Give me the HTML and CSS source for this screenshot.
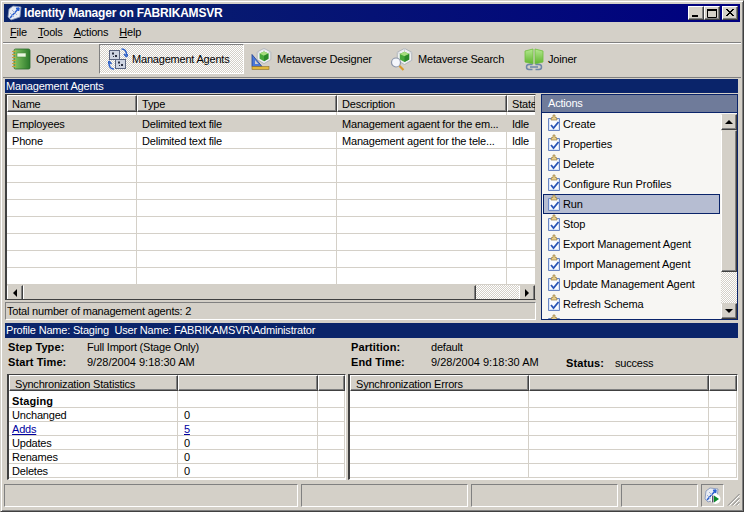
FILE: index.html
```html
<!DOCTYPE html>
<html lang="en">
<head>
<meta charset="utf-8">
<title>Identity Manager on FABRIKAMSVR</title>
<link rel="stylesheet" href="styles.css">
</head>
<body>
<svg class="defs" width="0" height="0" aria-hidden="true">
  <defs>
    <linearGradient id="gGreen" x1="0" y1="0" x2="1" y2="0"><stop offset="0" stop-color="#86c663"/><stop offset="1" stop-color="#2b7a2b"/></linearGradient>
    <linearGradient id="gPanel" x1="0" y1="0" x2="0" y2="1"><stop offset="0" stop-color="#b5e890"/><stop offset="1" stop-color="#5fb52e"/></linearGradient>
    <symbol id="clip" viewBox="0 0 16 18">
      <path d="M2.500 4.500h11v12h-11z" fill="#dbe5f7" stroke="#6a86c4"/>
      <path d="M4 6h8v9h-8z" fill="#fbfcff"/>
      <path d="M5.500 3.500h1.500v-2.500h2v2.500h1.500l.5 2.500h-6z" fill="#e8cf8e" stroke="#9a7d3c" stroke-width=".7"/>
      <path d="M5 11l2.500 3 5-6" fill="none" stroke="#2a55b5" stroke-width="1.800"/>
    </symbol>
    <symbol id="cube" viewBox="0 0 20 20">
      <path d="M10 .5l8.500 4.500v9.500l-8.500 5-8.500-5v-9.500z" fill="#eef0f2" stroke="#a9adb5"/>
      <path d="M10 .5v5M1.500 5l5 2.500M18.500 5l-5 2.500" stroke="#c8ccd2"/>
      <path d="M10 4.500l5.500 2.500v6.500l-5.500 3-5.500-3v-6.500z" fill="#46a83a"/>
      <path d="M4.500 7l5.500 2.700 5.500-2.700-5.500-2.500z" fill="#a5dd7d"/>
      <path d="M10 9.700v6.800l5.500-3v-6.500z" fill="#2b8a2b"/>
    </symbol>
    <symbol id="app" viewBox="0 0 16 16">
      <path d="M2 4l4-3 8 1-1 10-9 3-3-3z" fill="#e8ecf4" stroke="#7d8fb5" stroke-width=".8"/>
      <path d="M3 13l9-10M12 3l-3 .5M12 3l-.5 3" fill="none" stroke="#2a5fd0" stroke-width="1.500"/>
      <path d="M3 8l4 4M5 5l5 5" stroke="#9fb1d4"/>
    </symbol>
  </defs>
</svg>

<div class="window">
  <header class="titlebar">
    <svg class="title-icon" width="16" height="16"><use href="#app"/></svg>
    <span class="title-text">Identity Manager on FABRIKAMSVR</span>
    <div class="wbtns">
      <span class="wbtn"><svg width="14" height="12"><rect x="3" y="8" width="6" height="2" fill="#000"/></svg></span>
      <span class="wbtn"><svg width="14" height="12"><path d="M2.500 2.500h9v8h-9z" fill="none" stroke="#000"/><rect x="2" y="2" width="10" height="2" fill="#000"/></svg></span>
      <span class="wbtn wbtn-close"><svg width="14" height="12"><path d="M3 2l7 7M4 2l7 7M10 2l-7 7M11 2l-7 7" stroke="#000"/></svg></span>
    </div>
  </header>

  <nav class="menubar">
    <span class="menu"><u>F</u>ile</span>
    <span class="menu"><u>T</u>ools</span>
    <span class="menu"><u>A</u>ctions</span>
    <span class="menu"><u>H</u>elp</span>
  </nav>

  <div class="toolbar">
    <div class="tool tool-ops">
      <svg width="20" height="22" viewBox="0 0 20 22">
        <rect x="3" y="1" width="16" height="20" rx="1.500" fill="url(#gGreen)" stroke="#2c6b2c" stroke-width=".8"/>
        <rect x="6" y="5" width="9" height="4" fill="#e9f6df" stroke="#4c8c3c" stroke-width=".6"/>
        <path d="M1 3.500h4M1 6.500h4M1 9.500h4M1 12.500h4M1 15.500h4M1 18.500h4" stroke="#c9a23c" stroke-width="1.200"/>
      </svg>
      <span>Operations</span>
    </div>
    <div class="tool tool-active">
      <svg width="20" height="22" viewBox="0 0 20 22">
        <rect x="1.500" y="2.500" width="10" height="9" fill="#cfd5e2" stroke="#5b6580"/>
        <rect x="7.500" y="11.500" width="10" height="9" fill="#cfd5e2" stroke="#5b6580"/>
        <path d="M4 4.500h2v2h-2zM7 7h2v2h-2zM5 8h1v1h-1zM10 13.500h2v2h-2zM13 16h2v2h-2zM11 17h1v1h-1z" fill="#2a2f40"/>
        <path d="M13.500 1c3.500 0 5 2 5 6M18.500 9l-2.500-3M18.500 9l1.500-3" fill="none" stroke="#2f62c9" stroke-width="1.500"/>
        <path d="M6 21c-3.500 0-5-2-5-6M1 13l-1 3M1 13l2.500 3" fill="none" stroke="#2f62c9" stroke-width="1.500"/>
      </svg>
      <span>Management Agents</span>
    </div>
    <div class="tool tool-designer">
      <svg width="21" height="22" viewBox="0 0 21 22">
        <use href="#cube" x="5" y="0" width="16" height="16"/>
        <path d="M1 18.500v-12l10 12z" fill="#4a78d8" stroke="#1f3f90" stroke-width=".8"/>
        <path d="M4 16v-4l3.500 4z" fill="#d4d0c8"/>
        <rect x="1" y="18.500" width="17" height="3" fill="#e2b93c" stroke="#8a6d2c" stroke-width=".6"/>
      </svg>
      <span>Metaverse Designer</span>
    </div>
    <div class="tool tool-search">
      <svg width="23" height="23" viewBox="0 0 23 23">
        <use href="#cube" x="6" y="0" width="17" height="17"/>
        <circle cx="6" cy="14.500" r="4.500" fill="#f4f6fb" stroke="#8c95a8" stroke-width="1.200"/>
        <path d="M9.500 18l4 4" stroke="#d99a2b" stroke-width="2.200"/>
      </svg>
      <span>Metaverse Search</span>
    </div>
    <div class="tool tool-joiner">
      <svg width="20" height="23" viewBox="0 0 20 23">
        <path d="M1 3l8-2v15l-8-2z" fill="url(#gPanel)" stroke="#6fbf3c" stroke-width=".8"/>
        <path d="M19 3l-8-2v15l8-2z" fill="url(#gPanel)" stroke="#6fbf3c" stroke-width=".8"/>
        <path d="M8.500 16.500h-3.500a2.500 2.500 0 0 0 0 5h3.500M11.500 16.500h3.500a2.500 2.500 0 0 1 0 5h-3.500M6 19h8" fill="none" stroke="#6e86a8" stroke-width="1.500"/>
      </svg>
      <span>Joiner</span>
    </div>
  </div>

  <div class="band band-top">Management Agents</div>

  <main class="main">
    <section class="left">
      <div class="grid-panel">
        <table class="agents">
          <colgroup><col class="c-name"><col class="c-type"><col class="c-desc"><col class="c-state"></colgroup>
          <thead>
            <tr><th>Name</th><th>Type</th><th>Description</th><th>State</th></tr>
          </thead>
          <tbody>
            <tr class="spacer"><td></td><td></td><td></td><td></td></tr>
            <tr class="selected"><td>Employees</td><td>Delimited text file</td><td>Management agaent for the em...</td><td>Idle</td></tr>
            <tr><td>Phone</td><td>Delimited text file</td><td>Management agent for the tele...</td><td>Idle</td></tr>
            <tr><td></td><td></td><td></td><td></td></tr>
            <tr><td></td><td></td><td></td><td></td></tr>
            <tr><td></td><td></td><td></td><td></td></tr>
            <tr><td></td><td></td><td></td><td></td></tr>
            <tr><td></td><td></td><td></td><td></td></tr>
            <tr><td></td><td></td><td></td><td></td></tr>
            <tr><td></td><td></td><td></td><td></td></tr>
            <tr><td></td><td></td><td></td><td></td></tr>
          </tbody>
        </table>
        <div class="hscroll">
          <span class="sbtn"><svg width="14" height="14"><path d="M9 3v8l-4-4z" fill="#000"/></svg></span>
          <span class="hthumb"></span>
          <span class="hatch"></span>
          <span class="sbtn"><svg width="14" height="14"><path d="M5 3v8l4-4z" fill="#000"/></svg></span>
        </div>
      </div>
      <div class="total">Total number of management agents: 2</div>
    </section>

    <aside class="actions">
      <div class="actions-head">Actions</div>
      <div class="actions-body">
        <ul class="action-list">
          <li class="action"><svg width="16" height="18"><use href="#clip"/></svg><span>Create</span></li>
          <li class="action"><svg width="16" height="18"><use href="#clip"/></svg><span>Properties</span></li>
          <li class="action"><svg width="16" height="18"><use href="#clip"/></svg><span>Delete</span></li>
          <li class="action"><svg width="16" height="18"><use href="#clip"/></svg><span>Configure Run Profiles</span></li>
          <li class="action action-hot"><svg width="16" height="18"><use href="#clip"/></svg><span>Run</span></li>
          <li class="action"><svg width="16" height="18"><use href="#clip"/></svg><span>Stop</span></li>
          <li class="action"><svg width="16" height="18"><use href="#clip"/></svg><span>Export Management Agent</span></li>
          <li class="action"><svg width="16" height="18"><use href="#clip"/></svg><span>Import Management Agent</span></li>
          <li class="action"><svg width="16" height="18"><use href="#clip"/></svg><span>Update Management Agent</span></li>
          <li class="action"><svg width="16" height="18"><use href="#clip"/></svg><span>Refresh Schema</span></li>
          <li class="action"><svg width="16" height="18"><use href="#clip"/></svg></li>
        </ul>
        <div class="vscroll">
          <span class="sbtn"><svg width="14" height="14"><path d="M3 9h8l-4-4z" fill="#000"/></svg></span>
          <span class="vthumb"></span>
          <span class="hatch"></span>
          <span class="sbtn"><svg width="14" height="14"><path d="M3 5h8l-4 4z" fill="#000"/></svg></span>
        </div>
      </div>
    </aside>
  </main>

  <div class="band band-profile">Profile Name: Staging&nbsp; User Name: FABRIKAMSVR\Administrator</div>

  <dl class="details">
    <dt>Step Type:</dt><dd>Full Import (Stage Only)</dd>
    <dt>Partition:</dt><dd>default</dd>
    <dt class="blank"></dt><dd class="blank"></dd>
    <dt>Start Time:</dt><dd class="time">9/28/2004 9:18:30 AM</dd>
    <dt>End Time:</dt><dd class="time">9/28/2004 9:18:30 AM</dd>
    <dt class="status-key">Status:</dt><dd class="status-val">success</dd>
  </dl>

  <div class="stats">
    <div class="stat-panel">
      <table class="stat stat-left">
        <colgroup><col class="s1"><col class="s2"><col></colgroup>
        <thead><tr><th>Synchronization Statistics</th><th></th><th></th></tr></thead>
        <tbody>
          <tr><td class="strong">Staging</td><td></td><td></td></tr>
          <tr><td>Unchanged</td><td class="num">0</td><td></td></tr>
          <tr><td><a href="#adds">Adds</a></td><td class="num"><a href="#adds">5</a></td><td></td></tr>
          <tr><td>Updates</td><td class="num">0</td><td></td></tr>
          <tr><td>Renames</td><td class="num">0</td><td></td></tr>
          <tr><td>Deletes</td><td class="num">0</td><td></td></tr>
        </tbody>
      </table>
    </div>
    <div class="stat-panel stat-panel-r">
      <table class="stat stat-right">
        <colgroup><col class="r1"><col class="r2"><col></colgroup>
        <thead><tr><th>Synchronization Errors</th><th></th><th></th></tr></thead>
        <tbody>
          <tr><td></td><td></td><td></td></tr>
          <tr><td></td><td></td><td></td></tr>
          <tr><td></td><td></td><td></td></tr>
          <tr><td></td><td></td><td></td></tr>
          <tr><td></td><td></td><td></td></tr>
          <tr><td></td><td></td><td></td></tr>
        </tbody>
      </table>
    </div>
  </div>

  <footer class="statusbar">
    <span class="cell cell-1"></span>
    <span class="cell cell-2"></span>
    <span class="cell cell-3"></span>
    <span class="cell cell-4"></span>
    <span class="cell cell-5">
      <svg width="18" height="18" viewBox="0 0 18 18">
        <use href="#app" x="0" y="0" width="16" height="16"/>
        <circle cx="11.500" cy="12" r="5" fill="#fff"/>
        <path d="M10 8.500v7l5-3.500z" fill="#0c8a2a"/>
        <rect x="8" y="8.500" width="1.500" height="7" fill="#556"/>
      </svg>
    </span>
    <svg class="grip" width="13" height="13" viewBox="0 0 13 13">
      <path d="M12.500 1l-11.500 11.500M12.500 5l-7.500 7.500M12.500 9l-3.500 3.500" stroke="#808080" fill="none"/>
      <path d="M12.500 2.500l-10 10M12.500 6.500l-6 6M12.500 10.500l-2 2" stroke="#fff" fill="none"/>
    </svg>
  </footer>
</div>
</body>
</html>
```
FILE: styles.css
```css
* { box-sizing: border-box; }
html, body { margin: 0; padding: 0; }
body {
  width: 744px;
  height: 512px;
  overflow: hidden;
  background: #d4d0c8;
  font-family: "Liberation Sans", Arial, sans-serif;
  font-size: 11px;
  line-height: 13px;
  letter-spacing: -.2px;
  color: #000;
}
.defs { position: absolute; }
.window {
  width: 744px;
  height: 512px;
  padding: 3px 2px 1px 2px;
  border: 1px solid;
  border-color: #d4d0c8 #404040 #404040 #d4d0c8;
  box-shadow: inset 1px 1px 0 #fff, inset -1px -1px 0 #808080;
  display: flex;
  flex-direction: column;
  background: #d4d0c8;
  overflow: hidden;
}

/* Title bar */
.titlebar {
  flex: none;
  height: 18px;
  margin: 0 1px;
  display: flex;
  align-items: center;
  padding: 0 2px 0 3px;
  background: linear-gradient(90deg, #0a246a 0%, #000080 100%);
  color: #fff;
}
.title-icon { flex: none; margin-right: 1px; }
.title-text { font-weight: bold; font-size: 12px; letter-spacing: -.2px; white-space: nowrap; }
.wbtns { margin-left: auto; display: flex; }
.wbtn {
  width: 16px;
  height: 14px;
  background: #d4d0c8;
  border: 1px solid;
  border-color: #fff #404040 #404040 #fff;
  box-shadow: inset -1px -1px 0 #808080;
  display: flex;
}
.wbtn-close { margin-left: 2px; }

/* Menu */
.menubar {
  flex: none;
  height: 20px;
  display: flex;
  align-items: center;
  padding-left: 7px;
  gap: 11px;
}
.menu { white-space: nowrap; }

/* Toolbar */
.toolbar {
  flex: none;
  height: 36px;
  display: grid;
  grid-template-columns: 96px 145px 140px 133px 1fr;
  align-items: start;
  padding-top: 1px;
  border-top: 1px solid #808080;
  box-shadow: inset 0 1px 0 #fff;
  border-bottom: 1px solid #808080;
  white-space: nowrap;
}
.tool {
  height: 30px;
  display: flex;
  align-items: center;
  gap: 5px;
}
.tool-ops { padding-left: 8px; }
.tool-active {
  padding-left: 8px;
  gap: 4px;
  border: 1px solid;
  border-color: #808080 #fff #fff #808080;
  background: repeating-conic-gradient(#fff 0 25%, #d4d0c8 0 50%) 0 0 / 2px 2px;
}
.tool-designer { padding-left: 7px; }
.tool-search { padding-left: 6px; }
.tool-joiner { padding-left: 7px; gap: 4px; }

/* Navy bands */
.band {
  flex: none;
  margin: 0 0 0 2px;
  width: 733px;
  height: 14px;
  background: #0a246a;
  color: #fff;
  padding-left: 1px;
  line-height: 14px;
  white-space: nowrap;
}
.band-top { margin-top: 1px; }
.band-profile { margin-top: 3px; height: 15px; line-height: 15px; }

/* Main area */
.main {
  flex: none;
  margin-left: 2px;
  width: 733px;
  height: 226px;
  margin-top: 1px;
  display: grid;
  grid-template-columns: 531px 197px;
  column-gap: 5px;
}
.left { display: flex; flex-direction: column; gap: 2px; min-width: 0; }
.grid-panel {
  height: 206px;
  border: 1px solid;
  border-color: #404040 #d4d0c8 #404040 #404040;
  border-left-width: 2px;
  background: #fff;
  overflow: hidden;
  display: flex;
  flex-direction: column;
}
table { border-collapse: separate; border-spacing: 0; table-layout: fixed; }
.agents { width: 529px; flex: none; }
.c-name { width: 130px; }
.c-type { width: 200px; }
.c-desc { width: 170px; }
.agents th, .stat th {
  text-align: left;
  font-weight: normal;
  background: #d4d0c8;
  border: 1px solid;
  border-color: #fff #404040 #404040 #fff;
  box-shadow: inset -1px -1px 0 #808080;
  overflow: hidden;
  white-space: nowrap;
}
.agents th { height: 17px; padding: 1px 0 0 4px; }
.agents td {
  height: 17px;
  padding: 3px 0 0 5px;
  border-bottom: 1px solid #d4d0c8;
  border-right: 1px solid #d4d0c8;
  overflow: hidden;
  white-space: nowrap;
}
.agents .spacer td { height: 3px; padding: 0; border-bottom: 0; }
.agents .selected td { background: #d4d0c8; }
.hscroll {
  margin-top: auto;
  height: 16px;
  flex: none;
  display: flex;
  background: #d4d0c8;
}
.sbtn {
  flex: none;
  width: 16px;
  height: 16px;
  background: #d4d0c8;
  border: 1px solid;
  border-color: #d4d0c8 #404040 #404040 #fff;
  box-shadow: inset -1px -1px 0 #808080;
  display: flex;
}
.hthumb {
  width: 453px;
  flex: none;
  background: #d4d0c8;
  border: 1px solid;
  border-color: #d4d0c8 #404040 #404040 #fff;
  box-shadow: inset -1px -1px 0 #808080;
}
.hatch {
  flex: 1;
  background: repeating-conic-gradient(#fff 0 25%, #d4d0c8 0 50%) 0 0 / 2px 2px;
}
.total {
  height: 18px;
  border: 1px solid;
  border-color: #808080 #fff #fff #808080;
  padding-left: 1px;
  line-height: 16px;
  white-space: nowrap;
}

/* Actions */
.actions {
  height: 226px;
  border: 1px solid #0a246a;
  display: flex;
  flex-direction: column;
  overflow: hidden;
}
.actions-head {
  flex: none;
  height: 18px;
  padding-left: 6px;
  background: #6f7b9a;
  color: #fff;
  line-height: 17px;
  border-bottom: 1px solid #0a246a;
}
.actions-body { flex: 1; min-height: 0; display: flex; background: #f7f6f3; }
.action-list {
  flex: 1;
  margin: 0;
  padding: 1px 1px 0 1px;
  list-style: none;
  overflow: hidden;
  letter-spacing: -.1px;
}
.action {
  height: 20px;
  padding-left: 2px;
  display: flex;
  align-items: center;
  gap: 1px;
  border: 1px solid transparent;
  white-space: nowrap;
}
.action svg { flex: none; margin-top: -2px; }
.action-hot { background: #b6bdd2; border-color: #0a246a; }
.vscroll {
  flex: none;
  width: 16px;
  height: 205px;
  margin-top: 1px;
  display: flex;
  flex-direction: column;
}
.vthumb {
  flex: none;
  height: 142px;
  background: #d4d0c8;
  border: 1px solid;
  border-color: #d4d0c8 #404040 #404040 #fff;
  box-shadow: inset -1px -1px 0 #808080;
}

/* Details */
.details {
  flex: none;
  margin: 2px 0 0 5px;
  height: 31px;
  display: grid;
  grid-template-columns: 79px 264px 80px 135px 49px 1fr;
  grid-template-rows: 15px 15px;
  align-items: center;
}
.details dt { font-weight: bold; letter-spacing: .1px; white-space: nowrap; }
.details dd { margin: 0; white-space: nowrap; }
.details dd.time { letter-spacing: 0; }
.status-key { padding-top: 1px; }
.status-val { padding-top: 2px; }

/* Stat tables */
.stats {
  flex: none;
  margin: 3px 0 0 4px;
  height: 106px;
  display: flex;
  gap: 2px;
}
.stat-panel {
  width: 339px;
  height: 106px;
  border: 1px solid;
  border-color: #808080 #fff #fff #808080;
  border-left: 2px solid #404040;
  border-top: 1px solid #404040;
  background: #fff;
  overflow: hidden;
}
.stat-panel-r { width: 390px; }
.stat { width: 100%; }
.s1 { width: 169px; }
.s2 { width: 140px; }
.r1 { width: 179px; }
.r2 { width: 180px; }
.stat th { height: 16px; padding: 2px 0 0 5px; line-height: 12px; }
.stat td {
  height: 14px;
  padding: 0 0 0 3px;
  line-height: 12px;
  border-bottom: 1px solid #d4d0c8;
  border-right: 1px solid #d4d0c8;
  overflow: hidden;
  white-space: nowrap;
}
.stat tbody tr:first-child td { height: 17px; }
.stat td.num { padding-left: 6px; }
.stat td.strong { font-weight: bold; letter-spacing: .1px; padding-top: 3px; }
.stat a { color: #0000a0; }

/* Status bar */
.statusbar {
  flex: none;
  margin: 4px 0 0 1px;
  height: 23px;
  display: flex;
  gap: 3px;
  align-items: stretch;
  position: relative;
}
.cell {
  display: block;
  border: 1px solid;
  border-color: #808080 #fff #fff #808080;
}
.cell-1 { width: 294px; }
.cell-2 { width: 167px; }
.cell-3 { width: 147px; }
.cell-4 { width: 77px; }
.cell-5 { width: 23px; display: flex; align-items: center; justify-content: center; }
.grip { position: absolute; right: 1px; bottom: 1px; }
```
